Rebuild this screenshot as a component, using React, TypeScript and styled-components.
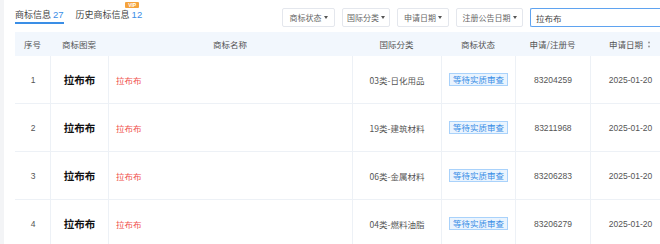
import React from 'react';
import styled, { createGlobalStyle } from 'styled-components';

const GlobalStyle = createGlobalStyle`
  html, body {
    margin: 0;
    padding: 0;
    background: #fff;
    font-family: "Noto Sans CJK SC", "Noto Sans", sans-serif;
    overflow: hidden;
  }
`;

type Row = {
  no: number,
  name: string,
  cls: string,
  status: string,
  regNo: string,
  date: string,
}

const rows: Row[] = [
  { no: 1, name: '拉布布', cls: '03类-日化用品', status: '等待实质审查', regNo: '83204259', date: '2025-01-20' },
  { no: 2, name: '拉布布', cls: '19类-建筑材料', status: '等待实质审查', regNo: '83211968', date: '2025-01-20' },
  { no: 3, name: '拉布布', cls: '06类-金属材料', status: '等待实质审查', regNo: '83206283', date: '2025-01-20' },
  { no: 4, name: '拉布布', cls: '04类-燃料油脂', status: '等待实质审查', regNo: '83206279', date: '2025-01-20' },
];

const cols = '35px 58px 244px 89px 74px 75px 80px';

const Page = styled.div`
  display: flex;
  width: 660px;
  height: 244px;
  overflow: hidden;
`;

const Strip = styled.div`
  width: 4px;
  flex: none;
  background: #f3f4f6;
`;

const Main = styled.div`
  flex: 1;
  padding-left: 11px;
  display: flex;
  flex-direction: column;
  min-width: 0;
`;

const TopBar = styled.div`
  display: flex;
  align-items: flex-start;
  height: 32px;
  flex: none;
`;

const Tabs = styled.div`
  display: flex;
  gap: 12px;
  padding-top: 9px;
`;

const Tab = styled.div<{ active?: boolean }>`
  position: relative;
  font-size: 9px;
  line-height: 12px;
  color: #444;
  padding-bottom: 1px;
  white-space: nowrap;
  border-bottom: 2px solid ${({ active }) => (active ? '#3a8ee6' : 'transparent')};
`;

const Count = styled.span`
  color: #3a8ee6;
  margin-left: 2px;
  font-family: "Liberation Sans", sans-serif;
  font-size: 9.5px;
`;

const Vip = styled.span`
  position: absolute;
  right: 3px;
  top: -7px;
  background: #f5a33c;
  color: #fff;
  font-size: 5px;
  line-height: 6px;
  padding: 0 3px;
  border-radius: 1px;
  font-family: "Liberation Sans", sans-serif;
  font-weight: bold;
`;

const Filters = styled.div`
  margin-left: auto;
  display: flex;
  gap: 7px;
  padding-top: 8px;
`;

const Drop = styled.div<{ w: number }>`
  width: ${({ w }) => w}px;
  height: 19px;
  box-sizing: border-box;
  border: 1px solid #e4e7ed;
  border-radius: 2px;
  font-size: 8px;
  color: #666;
  white-space: nowrap;
  display: flex;
  align-items: center;
  justify-content: center;
  gap: 2px;
`;

const Caret = styled.span`
  width: 0;
  height: 0;
  border-left: 2px solid transparent;
  border-right: 2px solid transparent;
  border-top: 3px solid #555;
`;

const Search = styled.div`
  width: 130px;
  height: 19px;
  box-sizing: border-box;
  border: 1px solid #5fa3f0;
  border-right: none;
  border-radius: 2px 0 0 2px;
  font-size: 8.5px;
  color: #444;
  padding-left: 5px;
  display: flex;
  align-items: center;
`;

const Table = styled.div`
  display: flex;
  flex-direction: column;
`;

const Grid = styled.div`
  display: grid;
  grid-template-columns: ${cols};
`;

const Head = styled(Grid)`
  height: 24px;
  background: #f2f7fd;
`;

const HCell = styled.div`
  display: flex;
  align-items: center;
  justify-content: center;
  font-size: 8.5px;
  color: #555;
  white-space: nowrap;
  gap: 4px;
`;

const Body = styled(Grid)`
  height: 48px;
  border-bottom: 1px solid #edf1f6;
  box-sizing: border-box;
`;

const Cell = styled.div<{ left?: boolean, first?: boolean }>`
  display: flex;
  align-items: center;
  justify-content: ${({ left }) => (left ? 'flex-start' : 'center')};
  padding-left: ${({ left }) => (left ? '7px' : '0')};
  border-left: 1px solid ${({ first }) => (first ? 'transparent' : '#edf1f6')};
  font-size: 8.5px;
  color: #555;
  white-space: nowrap;
`;

const Num = styled.span`
  font-family: "Liberation Sans", sans-serif;
  font-size: 8.5px;
  color: #555;
`;

const Mark = styled.span`
  font-size: 10.5px;
  font-weight: bold;
  color: #111;
`;

const Name = styled.span`
  color: #f0504a;
  font-size: 8.5px;
`;

const Badge = styled.span`
  border: 1px solid #a9d2fb;
  background: #eaf4fe;
  color: #3a8ee6;
  font-size: 8.5px;
  line-height: 11px;
  padding: 0 3px;
`;

const SortIcon = () => (
  <svg width="4" height="7" viewBox="0 0 4 7">
    <circle cx="2" cy="1.5" r="1" fill="#999" />
    <circle cx="2" cy="5.5" r="1" fill="#999" />
  </svg>
);

const App = () => {
  return (
    <>
      <GlobalStyle />
      <Page>
        <Strip />
        <Main>
          <TopBar>
            <Tabs>
              <Tab active>商标信息<Count>27</Count></Tab>
              <Tab>历史商标信息<Count>12</Count><Vip>VIP</Vip></Tab>
            </Tabs>
            <Filters>
              <Drop w={53}>商标状态<Caret /></Drop>
              <Drop w={48}>国际分类<Caret /></Drop>
              <Drop w={52}>申请日期<Caret /></Drop>
              <Drop w={67}>注册公告日期<Caret /></Drop>
              <Search>拉布布</Search>
            </Filters>
          </TopBar>
          <Table>
            <Head>
              <HCell>序号</HCell>
              <HCell>商标图案</HCell>
              <HCell>商标名称</HCell>
              <HCell>国际分类</HCell>
              <HCell>商标状态</HCell>
              <HCell>申请/注册号</HCell>
              <HCell>申请日期<SortIcon /></HCell>
            </Head>
            {rows.map((r) => (
              <Body key={r.no}>
                <Cell first><Num>{r.no}</Num></Cell>
                <Cell><Mark>{r.name}</Mark></Cell>
                <Cell left><Name>{r.name}</Name></Cell>
                <Cell>{r.cls}</Cell>
                <Cell><Badge>{r.status}</Badge></Cell>
                <Cell><Num>{r.regNo}</Num></Cell>
                <Cell><Num>{r.date}</Num></Cell>
              </Body>
            ))}
          </Table>
        </Main>
      </Page>
    </>
  );
};

export default App;
